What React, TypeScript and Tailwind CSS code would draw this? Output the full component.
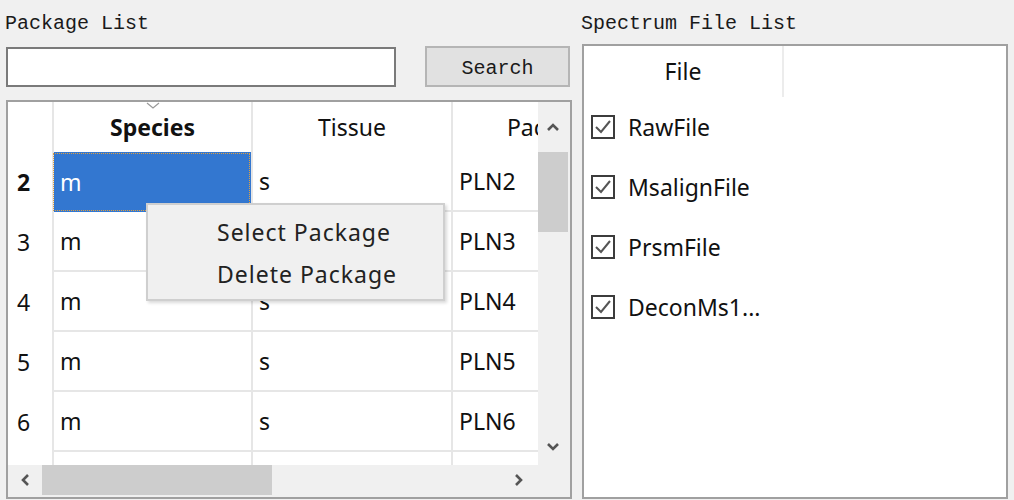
import React from 'react'

const rows = [
  { n: '2', species: 'm', tissue: 's', pkg: 'PLN2' },
  { n: '3', species: 'm', tissue: 's', pkg: 'PLN3' },
  { n: '4', species: 'm', tissue: 's', pkg: 'PLN4' },
  { n: '5', species: 'm', tissue: 's', pkg: 'PLN5' },
  { n: '6', species: 'm', tissue: 's', pkg: 'PLN6' },
  { n: '7', species: 'm', tissue: 's', pkg: 'PLN7' },
]

const files = ['RawFile', 'MsalignFile', 'PrsmFile', 'DeconMs1...']

const ui = { fontFamily: '"Noto Sans", "Open Sans", sans-serif' }
const mono = { fontFamily: '"Liberation Mono", "DejaVu Sans Mono", monospace' }

function Chevron({ dir }: { dir: 'up' | 'down' | 'left' | 'right' }) {
  const pts = {
    up: '2,10 7,5 12,10',
    down: '2,4 7,9 12,4',
    left: '10,2 5,7 10,12',
    right: '4,2 9,7 4,12',
  }[dir]
  return (
    <svg width="14" height="14" viewBox="0 0 14 14">
      <polyline points={pts} fill="none" stroke="#555" strokeWidth="2.6" />
    </svg>
  )
}

function CheckBox() {
  return (
    <div className="w-[24px] h-[24px] border-2 border-[#3c3c3c] bg-white flex items-center justify-center">
      <svg width="20" height="20" viewBox="0 0 20 20">
        <polyline points="3,10 8,15 17,4" fill="none" stroke="#555" strokeWidth="2" />
      </svg>
    </div>
  )
}

export default function App() {
  return (
    <div className="relative w-[1014px] h-[500px] bg-[#f0f0f0] flex text-[#111] overflow-hidden" style={ui}>
      {/* Package List */}
      <div className="w-[575px] pl-[6px] flex flex-col">
        <div className="h-[44px] flex items-center pt-[3px] -ml-[1px] text-[20px] text-[#1a1a1a]" style={mono}>
          Package List
        </div>
        <div className="mt-[2px] flex items-center">
          <div className="w-[390px] h-[40px] bg-white border-2 border-[#7a7a7a]" />
          <button
            className="ml-[29px] w-[145px] h-[41px] pt-[4px] bg-[#e1e1e1] border-2 border-[#b5b5b5] text-[20px] text-[#1a1a1a]"
            style={mono}
          >
            Search
          </button>
        </div>

        {/* Table */}
        <div className="mt-[13px] w-[566px] h-[399px] border-2 border-[#a0a0a0] bg-[#f0f0f0] flex flex-col overflow-hidden">
          <div className="flex h-[363px]">
            <div className="w-[530px] bg-white overflow-hidden">
              <div className="flex h-[50px] relative">
                <div className="w-[44px] shrink-0" />
                <div className="w-[199px] shrink-0 border-l-2 border-[#e6e6e6] flex items-center justify-center text-[23px] font-bold relative">
                  <span className="absolute top-0 left-1/2 -translate-x-1/2">
                    <svg width="14" height="8" viewBox="0 0 14 8">
                      <polyline points="1,1 7,6 13,1" fill="none" stroke="#999" strokeWidth="1.2" />
                    </svg>
                  </span>
                  Species
                </div>
                <div className="w-[200px] shrink-0 border-l-2 border-[#e6e6e6] flex items-center justify-center text-[23px]">
                  Tissue
                </div>
                <div className="w-[200px] shrink-0 border-l-2 border-[#e6e6e6] flex items-center justify-center text-[23px]">
                  Package
                </div>
              </div>
              {rows.map((r, i) => (
                <div key={r.n} className="flex h-[60px] text-[23px]">
                  <div className={`w-[44px] shrink-0 flex items-center pl-[9px] ${i === 0 ? 'font-bold' : ''}`}>{r.n}</div>
                  <div
                    className={`w-[199px] shrink-0 border-l-2 border-[#e6e6e6] flex items-center pl-[6px] ${
                      i === 0 ? 'bg-[#3377d0] text-white outline-1 outline-dotted outline-[#e0a040] -outline-offset-2 border-b-0' : 'border-b-2'
                    }`}
                  >
                    {r.species}
                  </div>
                  <div className="w-[200px] shrink-0 border-l-2 border-b-2 border-[#e6e6e6] flex items-center pl-[6px]">{r.tissue}</div>
                  <div className="w-[200px] shrink-0 border-l-2 border-b-2 border-[#e6e6e6] flex items-center pl-[6px]">{r.pkg}</div>
                </div>
              ))}
            </div>
            <div className="w-[30px] flex flex-col items-center">
              <div className="h-[50px] flex items-center justify-center"><Chevron dir="up" /></div>
              <div className="w-[30px] h-[80px] bg-[#cdcdcd]" />
              <div className="flex-1" />
              <div className="h-[36px] flex items-center justify-center"><Chevron dir="down" /></div>
            </div>
          </div>
          <div className="flex h-[30px] items-center">
            <div className="w-[34px] flex justify-center"><Chevron dir="left" /></div>
            <div className="w-[230px] h-[30px] bg-[#cdcdcd]" />
            <div className="flex-1" />
            <div className="w-[42px] flex justify-center"><Chevron dir="right" /></div>
            <div className="w-[30px] h-[30px] bg-[#f0f0f0]" />
          </div>
        </div>
      </div>

      {/* Spectrum File List */}
      <div className="flex flex-col ml-[6px]">
        <div className="h-[44px] flex items-center pt-[3px] text-[20px] text-[#1a1a1a]" style={mono}>
          Spectrum File List
        </div>
        <div className="ml-[1px] w-[426px] h-[455px] border-2 border-[#a0a0a0] bg-white">
          <div className="flex h-[51px]">
            <div className="w-[200px] border-r-2 border-[#ececec] flex items-center justify-center text-[23px]">File</div>
          </div>
          {files.map((f) => (
            <div key={f} className="h-[60px] flex items-center pl-[7px] text-[23px]">
              <CheckBox />
              <span className="ml-[13px]">{f}</span>
            </div>
          ))}
        </div>
      </div>

      {/* Context menu */}
      <div className="absolute left-[146px] top-[203px] w-[299px] h-[98px] bg-[#f0f0f0] border-2 border-[#cfcfcf] shadow-[2px_2px_3px_rgba(0,0,0,0.15)] flex flex-col pt-[6px] text-[23px] text-[#222]">
        <div className="h-[42px] flex items-center pl-[69px] tracking-[1px]">Select Package</div>
        <div className="h-[42px] flex items-center pl-[69px] tracking-[1px]">Delete Package</div>
      </div>
    </div>
  )
}
